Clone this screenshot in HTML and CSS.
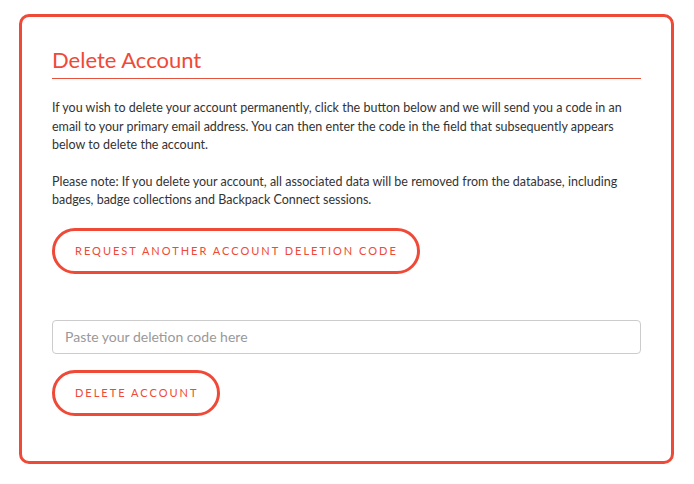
FILE: index.html
```html
<!DOCTYPE html>
<html lang="en">
   <head>
      <meta charset="UTF-8">
      <meta name="viewport" content="width=device-width, initial-scale=1.0">
      <link rel="stylesheet" href="styles.css">
      <title>Delete Account</title>
   </head>
   <body>
      <div class="card">
         <h2 class="title">Delete Account</h2>
         <p>If you wish to delete your account permanently, click the button below and we will send you a code in an email to your primary email address. You can then enter the code in the field that subsequently appears below to delete the account.</p>
         <p>Please note: If you delete your account, all associated data will be removed from the database, including badges, badge collections and Backpack Connect sessions.</p>
         <button class="btn" type="button">Request another account deletion code</button>
         <form class="delete-form" action="" method="post">
            <input class="code-input" type="text" name="code" placeholder="Paste your deletion code here">
            <button class="btn" type="submit">Delete account</button>
         </form>
      </div>
   </body>
</html>
```

FILE: styles.css
```css
body {
margin: 0;
padding: 14px 20px 0 19px;
font-family: Lato, "Noto Sans", sans-serif;
color: #333;
background: #fff;
}
.card {
width: 589px;
height: 384px;
border: 3px solid #ef4937;
border-radius: 10px;
padding: 30px;
}
.title {
margin: 0 0 20px;
padding: 0 0 5px;
font-size: 22px;
font-weight: normal;
color: #ef4937;
border-bottom: 1px solid #e5533f;
line-height: 26px;
}
p {
margin: 0 0 18px;
font-size: 12.5px;
line-height: 18.5px;
}
.btn {
display: block;
height: 46px;
padding: 0 19px 0 20px;
border: 3px solid #ef4937;
border-radius: 23px;
background: #fff;
color: #ef4937;
font-family: Lato, "Noto Sans", sans-serif;
font-size: 11px;
letter-spacing: 2px;
text-transform: uppercase;
white-space: nowrap;
cursor: pointer;
}
.delete-form {
margin-top: 46px;
}
.code-input {
display: block;
box-sizing: border-box;
width: 589px;
height: 34px;
padding: 0 12px;
border: 1px solid #ccc;
border-radius: 4px;
font-family: Lato, "Noto Sans", sans-serif;
font-size: 14px;
margin-bottom: 16px;
}
.code-input::placeholder {
color: #999;
}
```
